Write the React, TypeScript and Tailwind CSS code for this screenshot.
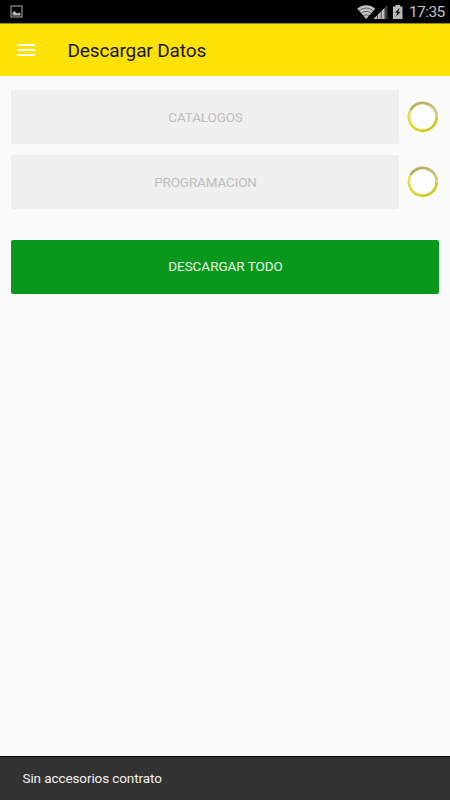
function Spinner() {
  return (
    <svg className="h-[32px] w-[32px] shrink-0" viewBox="0 0 32 32">
      <defs>
        <linearGradient id="upper" x1="0" y1="0" x2="1" y2="0.5">
          <stop offset="0" stopColor="#b3ac50" />
          <stop offset="0.5" stopColor="#bdb66c" />
          <stop offset="1" stopColor="#d0ca80" />
        </linearGradient>
        <linearGradient id="lower" x1="0" y1="0" x2="1" y2="0.6">
          <stop offset="0" stopColor="#e6df68" />
          <stop offset="0.5" stopColor="#e0d730" />
          <stop offset="1" stopColor="#d0c620" />
        </linearGradient>
      </defs>
      <circle cx="15.8" cy="15.8" r="14" fill="#fdfdfd" />
      <path d="M3.5 9.3A13.9 13.9 0 0 1 29.7 15.8" fill="none" stroke="url(#upper)" strokeWidth="2.8" />
      <path d="M29.7 15.8A13.9 13.9 0 1 1 3.5 9.3" fill="none" stroke="url(#lower)" strokeWidth="2.8" />
    </svg>
  );
}

function DownloadRow({ label }: { label: string }) {
  return (
    <div className="flex h-[54px] items-center">
      <button className="h-full w-[388px] rounded-[2px] bg-[#f0f0f0] pl-px pt-px text-[13.5px] tracking-[-0.15px] text-[#bebebe]">
        {label}
      </button>
      <div className="ml-[8px]">
        <Spinner />
      </div>
    </div>
  );
}

function StatusBar() {
  return (
    <div className="flex h-[23px] items-center bg-black pl-[10px] pr-[4px] text-[#c4c4c4]">
      <svg className="h-[13px] w-[13px]" viewBox="0 0 13 13">
        <rect x="1" y="1" width="11" height="11" fill="none" stroke="#929292" strokeWidth="1.2" />
        <path d="M2.5 10.5V7.5L4.5 6L6.5 8L8 8.5L9 7.5L10.5 8.5V10.5Z" fill="#b8b8b8" />
      </svg>
      <svg className="ml-auto h-[16px] w-[48px]" viewBox="0 0 48 16">
        <path d="M0.2 4.7C5.5 .1 12.9 .1 18.2 4.7L9.2 15Z" fill="#c4c4c4" />
        <path d="M1.9 7Q9.2 .9 16.5 7M4.1 9.4Q9.2 5.1 14.3 9.4M6.3 11.8Q9.2 9.5 12.1 11.8" fill="none" stroke="#333" strokeWidth=".7" />
        <path d="M16.5 15L30.5 1V15Z" fill="#3d3d3d" />
        <path d="M16.5 15L27.5 4V15Z" fill="#bdbdbd" />
        <path d="M20.5 9V15M24.2 5V15" stroke="#1c1c1c" strokeWidth=".7" />
        <path d="M36 2.5H38.5V1H43V2.5H45.5V15H36Z" fill="#b9b9b9" />
        <path d="M42.7 3.7L38 8.7H40.4L38.8 13L43.6 7.8H41.2Z" fill="#111" />
      </svg>
      <span className="ml-[4px] mt-[3px] w-[37px] whitespace-nowrap text-[15.5px] leading-none tracking-[-0.6px]">17:35</span>
    </div>
  );
}

export default function App() {
  return (
    <div className="flex h-[800px] w-[450px] flex-col overflow-hidden bg-[#fafafa] font-['Roboto',sans-serif]">
      <StatusBar />
      <header className="flex h-[53px] items-center border-t border-[#9a8900] bg-[#ffe205] pl-[17px]">
        <div className="flex w-[18px] flex-col gap-[3px]">
          <div className="h-[2px] bg-[#fffef0]" />
          <div className="h-[2px] bg-[#fffef0]" />
          <div className="h-[2px] bg-[#fffef0]" />
        </div>
        <h1 className="ml-[32.5px] pt-[2px] text-[19px] tracking-[-0.13px] text-[#16150a]">Descargar Datos</h1>
      </header>
      <main className="flex flex-1 flex-col px-[11px] pt-[14px]">
        <div className="flex flex-col gap-[11px]">
          <DownloadRow label="CATALOGOS" />
          <DownloadRow label="PROGRAMACION" />
        </div>
        <button className="mt-[30.5px] h-[54px] w-[428px] rounded-[2px] bg-[#09981c] pl-px text-[13.5px] tracking-[-0.04px] text-[#e8f5e9]">
          DESCARGAR TODO
        </button>
      </main>
      <footer className="flex h-[44px] items-center border-t border-black bg-[#323232] pl-[22.5px] text-[13.5px] tracking-[-0.1px] text-[#f0f0f0]">
        Sin accesorios contrato
      </footer>
    </div>
  );
}
